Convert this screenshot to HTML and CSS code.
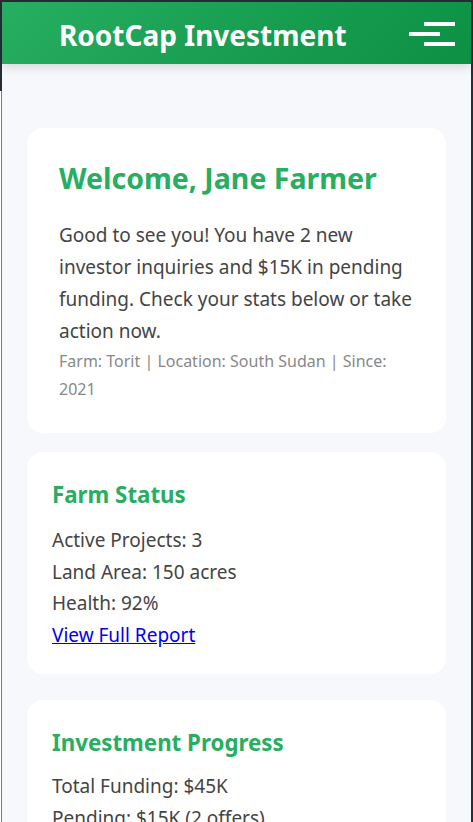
FILE: index.html
```html
<!DOCTYPE html>
<html lang="en">
<head>
<meta charset="utf-8">
<title>RootCap Investment</title>
<link rel="stylesheet" href="styles.css">
</head>
<body>
<div class="frame">
  <header class="topbar">
    <h1 class="brand">RootCap Investment</h1>
    <button class="menu-btn" aria-label="Menu">
      <span class="bar bar-right"></span>
      <span class="bar bar-left"></span>
      <span class="bar bar-right"></span>
    </button>
  </header>
  <nav class="side-menu" aria-hidden="true"></nav>
  <main class="content">
    <section class="card welcome">
      <h2 class="welcome-title">Welcome, Jane Farmer</h2>
      <p class="welcome-text">Good to see you! You have 2 new investor inquiries and $15K in pending funding. Check your stats below or take action now.</p>
      <p class="meta">Farm: Torit | Location: South Sudan | Since: 2021</p>
    </section>
    <section class="card stat first">
      <h3 class="card-title">Farm Status</h3>
      <p class="line">Active Projects: 3</p>
      <p class="line">Land Area: 150 acres</p>
      <p class="line">Health: 92%</p>
      <p class="line"><a class="link" href="#">View Full Report</a></p>
    </section>
    <section class="card stat">
      <h3 class="card-title tight">Investment Progress</h3>
      <p class="line">Total Funding: $45K</p>
      <p class="line">Pending: $15K (2 offers)</p>
      <p class="line">Investors: 4</p>
    </section>
  </main>
</div>
</body>
</html>
```
FILE: styles.css
```css
* { box-sizing: border-box; }
html, body { margin: 0; padding: 0; }
body {
  background: #262d37;
  font-family: "Noto Sans", "Open Sans", sans-serif;
  height: 822px;
  overflow: hidden;
}
.frame {
  margin: 2px 2px 0 2px;
  background: #f7f8fc;
  min-height: 820px;
  position: relative;
}
.topbar {
  height: 62px;
  background: linear-gradient(135deg, #27ae60 0%, #0b9044 100%);
  box-shadow: 0 3px 10px rgba(0,0,0,0.14);
  display: flex;
  align-items: center;
  justify-content: space-between;
  padding: 0 16px 0 57px;
  position: relative;
  z-index: 2;
}
.brand {
  margin: 5px 0 0 0;
  color: #fff;
  font-size: 28px;
  font-weight: 700;
  line-height: 1.2;
}
.menu-btn {
  background: none;
  border: 0;
  padding: 0;
  width: 46px;
  display: flex;
  flex-direction: column;
  gap: 6.3px;
  align-items: flex-end;
  align-self: flex-start;
  margin-top: 20px;
}
.bar {
  display: block;
  width: 31px;
  height: 3.7px;
  background: #fff;
}
.bar-left { align-self: flex-start; }
.side-menu {
  position: absolute;
  left: -250px;
  top: 89px;
  width: 250px;
  height: 740px;
  border-right: 1px solid #27ae60;
  background: #fff;
}
.content {
  padding: 64px 25px 0 25px;
  display: flex;
  flex-direction: column;
}
.card {
  background: #fff;
  border-radius: 16px;
}
.welcome {
  padding: 32px 32px 30.5px 32px;
  margin-bottom: 19px;
}
.welcome-title {
  margin: 0 0 22px 0;
  color: #27ae60;
  font-size: 28.5px;
  font-weight: 700;
  line-height: 1.3;
}
.welcome-text {
  margin: 0;
  color: #444;
  font-size: 19px;
  line-height: 32px;
}
.meta {
  margin: -0.5px 0 0 0;
  color: #888;
  font-size: 16px;
  line-height: 28px;
}
.stat {
  padding: 28px 25px 22px 25px;
  margin-bottom: 26px;
}
.card-title {
  margin: 0 0 14px 0;
  color: #27ae60;
  font-size: 22.3px;
  font-weight: 700;
  line-height: 30.8px;
}
.card-title.tight { margin-bottom: 12px; }
.line {
  margin: 0;
  color: #444;
  font-size: 19px;
  line-height: 31.8px;
}
.link {
  color: #0000ee;
  text-decoration: underline;
}
```
